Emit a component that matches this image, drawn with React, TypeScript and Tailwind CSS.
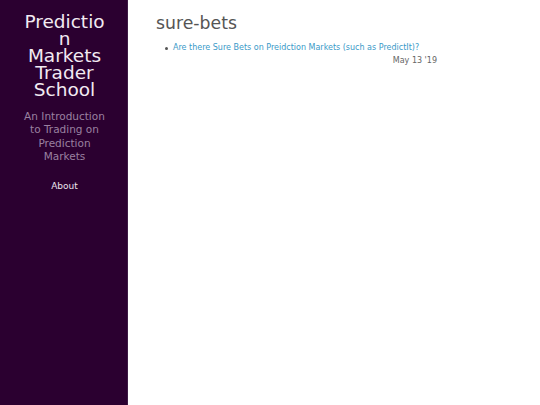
export default function App() {
  return (
    <div className="flex min-h-[405px] w-full font-['DejaVu_Sans',sans-serif]">
      <aside className="w-[128px] shrink-0 bg-[#2b0030] border-r border-[#3d1a44] flex flex-col items-center pl-[23px] pr-[21px] pt-[13px]">
        <h1 className="w-[84px] text-[18.5px] leading-[17px] text-[#f2eaf2] text-center break-words">
          Prediction Markets Trader School
        </h1>
        <p className="mt-[12px] text-[10.5px] leading-[13.3px] text-[#9a80a0] text-center w-[90px]">
          An Introduction to Trading on Prediction Markets
        </p>
        <a className="mt-[17px] text-[9px] text-[#ece4ee]">About</a>
      </aside>
      <main className="flex-1 bg-white pl-[28px] pt-[12px]">
        <div className="w-[281px]">
          <h2 className="text-[17.3px] leading-[22px] text-[#555555]">sure-bets</h2>
          <ul className="mt-[8px] pl-[9px] text-[8px] leading-[12px]">
            <li className="flex items-center gap-[5px]">
              <span className="size-[3px] rounded-full bg-[#555]" />
              <a className="text-[#3a9ac8]">Are there Sure Bets on Preidction Markets (such as PredictIt)?</a>
            </li>
          </ul>
          <div className="text-right text-[8px] leading-[14px] text-[#666666]">May 13 '19</div>
        </div>
      </main>
    </div>
  );
}
